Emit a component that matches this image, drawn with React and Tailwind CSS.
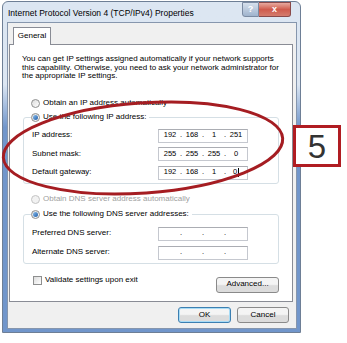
import React from "react";

const font = { fontFamily: '"Liberation Sans", Arial, sans-serif' };

const Radio = ({ checked, disabled }) => (
  <span
    className={`w-[9px] h-[9px] rounded-full border flex items-center justify-center shrink-0 ${
      disabled ? "border-[#c4c4c4] bg-[#f2f2f2]" : "border-[#8e8f8f] bg-linear-to-br from-[#dcdcdc] to-white"
    }`}
  >
    {checked && <span className="w-[5px] h-[5px] rounded-full bg-linear-to-br from-[#8cc0ef] to-[#1d5ca5]" />}
  </span>
);

const RadioRow = ({ label, checked, disabled }) => (
  <div className={`flex items-center gap-[3px] h-[12px] ${disabled ? "text-[#a0a0a0]" : "text-black"}`}>
    <Radio checked={checked} disabled={disabled} />
    <span>{label}</span>
  </div>
);

const IpBox = ({ parts, cursor }) => (
  <div className="w-[90px] h-[14px] border border-[#c5c8cf] border-t-[#abadb3] bg-white grid grid-cols-4 items-center text-[7.5px]">
    {parts.map((p, i) => (
      <div key={i} className="relative flex items-center justify-center">
        <span>{p}</span>
        {cursor && i === 3 && <span className="w-[1px] h-[9px] bg-black ml-[1px]" />}
        {i < 3 && <span className="absolute right-[-1px]">.</span>}
      </div>
    ))}
  </div>
);

const Field = ({ label, parts, cursor }) => (
  <div className="flex items-center h-[14px]">
    <span className="w-[126px]">{label}</span>
    <IpBox parts={parts} cursor={cursor} />
  </div>
);

const Btn = ({ children, w, primary }) => (
  <div
    className={`h-[16px] rounded-[3px] border flex items-center justify-center bg-linear-to-b from-[#f4f4f4] from-45% to-[#dcdcdc] to-55% ${w} ${
      primary ? "border-[#3c7fb1] shadow-[inset_0_0_0_1px_#a8dcf6]" : "border-[#8a8a8a]"
    }`}
  >
    {children}
  </div>
);

export default function App() {
  return (
    <div className="relative w-[347px] h-[343px] bg-white overflow-hidden text-[8px] leading-[8.5px]" style={font}>
      <div className="ml-[2px] mt-[1px] w-[299px] h-[332px] rounded-t-[6px] border border-[#6e7f96] bg-linear-to-b from-[#dce6f2] from-25% to-[#7196cb] to-38% flex flex-col pl-[4px] pr-[3px] pb-[3px]">
        <div className="h-[20px] flex justify-between items-start">
          <span className="pl-[1px] pt-[6px] text-[8.5px] leading-[10px] text-black">Internet Protocol Version 4 (TCP/IPv4) Properties</span>
          <div className="flex mr-[6px]">
            <div className="w-[17px] h-[15px] rounded-bl-[3px] border border-[#7a8aa2] bg-linear-to-b from-[#d6e0ec] to-[#9fb3cd] flex items-center justify-center text-white text-[9px] font-bold">?</div>
            <div className="w-[32px] h-[15px] rounded-br-[3px] border border-l-0 border-[#8a4a4a] bg-linear-to-b from-[#e6a99f] via-[#cf5b4d] to-[#d47c6e] flex items-center justify-center text-white text-[9px] font-bold">x</div>
          </div>
        </div>
        <div className="flex-1 bg-[#f0f0f0] border border-[#8696ad] flex flex-col">
          <div className="ml-[5px] mt-[4px] w-[38px] h-[18px] bg-white border border-b-0 border-[#898c95] flex items-center justify-center relative z-10 mb-[-1px]">
            General
          </div>
          <div className="ml-[1px] w-[284px] h-[258px] bg-white border border-[#898c95] flex flex-col">
            <p className="pl-[12px] pt-[10px] pr-[6px]">
              You can get IP settings assigned automatically if your network supports this capability. Otherwise, you need to ask your network administrator for the appropriate IP settings.
            </p>
            <div className="ml-[21px] mt-[17px]">
              <RadioRow label="Obtain an IP address automatically" />
            </div>
            <fieldset className="ml-[13px] mt-[2px] w-[256px] border border-[#d5dfe5] rounded-[3px] px-[7px] pb-[3px]">
              <legend className="pr-[3px]">
                <RadioRow label="Use the following IP address:" checked />
              </legend>
              <div className="flex flex-col gap-[4.5px] mt-[5px] pl-[1px]">
                <Field label="IP address:" parts={["192", "168", "1", "251"]} />
                <Field label="Subnet mask:" parts={["255", "255", "255", "0"]} />
                <Field label="Default gateway:" parts={["192", "168", "1", "0"]} cursor />
              </div>
            </fieldset>
            <div className="ml-[21px] mt-[10px]">
              <RadioRow label="Obtain DNS server address automatically" disabled />
            </div>
            <fieldset className="ml-[13px] mt-[3px] w-[256px] border border-[#d5dfe5] rounded-[3px] px-[7px] pb-[3px]">
              <legend className="pr-[3px]">
                <RadioRow label="Use the following DNS server addresses:" checked />
              </legend>
              <div className="flex flex-col gap-[5px] mt-[6px] pl-[1px]">
                <Field label="Preferred DNS server:" parts={["", "", "", ""]} />
                <Field label="Alternate DNS server:" parts={["", "", "", ""]} />
              </div>
            </fieldset>
            <div className="flex justify-between items-start mt-[11px] pl-[23px] pr-[13px]">
              <div className="flex items-center gap-[3px] h-[12px]">
                <span className="w-[9px] h-[9px] border border-[#8e8f8f] bg-linear-to-br from-[#dcdcdc] to-white" />
                <span>Validate settings upon exit</span>
              </div>
              <div className="mt-[2px]">
                <Btn w="w-[63px]">Advanced...</Btn>
              </div>
            </div>
          </div>
          <div className="flex justify-end gap-[6px] mt-[5px] mr-[7px]">
            <Btn w="w-[53px]" primary>OK</Btn>
            <Btn w="w-[52px]">Cancel</Btn>
          </div>
        </div>
      </div>

      <svg className="absolute left-0 top-0 pointer-events-none" width="347" height="343">
        <ellipse cx="143" cy="148" rx="140" ry="45" transform="rotate(-4 143 148)" fill="none" stroke="#a51d22" strokeWidth="3" />
      </svg>
      <div className="absolute left-[293px] top-[125px] w-[48px] h-[42px] border-[3px] border-[#b01c22] bg-white flex items-center justify-center text-[33px] leading-none text-[#333]">
        5
      </div>
    </div>
  );
}
